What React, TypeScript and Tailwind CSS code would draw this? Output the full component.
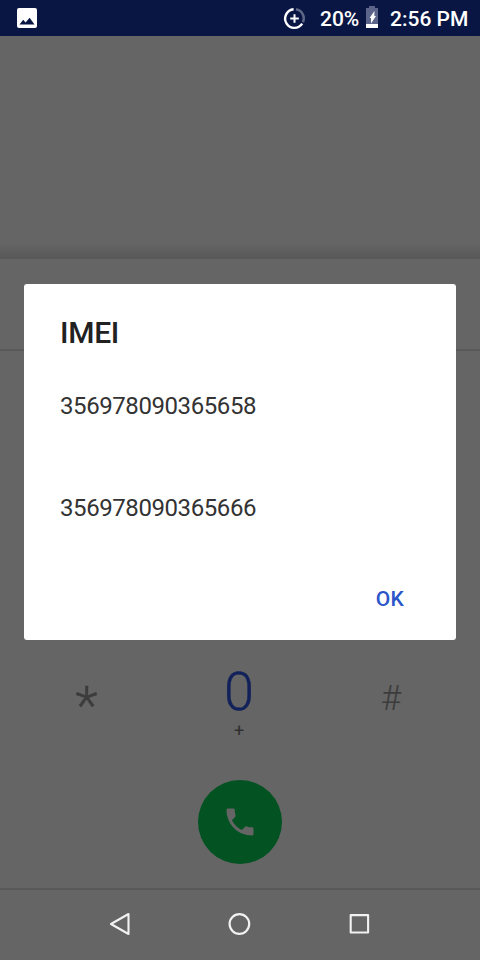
import React from "react";

function StatusBar() {
  return (
    <header className="flex h-9 shrink-0 items-center bg-[#091644] pr-3 pl-[17px] text-white">
      <svg className="size-5" viewBox="0 0 20 20">
        <rect width="20" height="20" rx="2" fill="#fff" />
        <path fill="#091644" d="M2.5 16.5 6.2 11.7 8.6 14.4 12.6 9.8 17.5 16.5z" />
      </svg>
      <svg className="mt-px ml-auto size-[25px]" viewBox="0 0 25 25" fill="none" stroke="#fff" strokeWidth="2.4">
        <path opacity=".35" d="M14 3.3a9.3 9.3 0 0 1 7 13" />
        <path d="M11.6 3.3a9.3 9.3 0 1 0 8.6 14.4" />
        <path strokeWidth="2" d="M12.5 8.2v8.6M8.2 12.5h8.6" />
      </svg>
      <span className="mt-0.5 ml-[13px] w-[46px] text-[21px] leading-none font-medium whitespace-nowrap">20%</span>
      <svg className="-mt-0.5 h-[22px] w-3" viewBox="0 0 12 22">
        <path fill="#5c648a" d="M3 0h6v2h3v20H0V2h3z" />
        <path fill="#fff" d="M0 18h12v4H0zM8.4 5v5H10l-5 7.5V12H3.6z" />
      </svg>
      <span className="mt-0.5 ml-3 w-[78px] text-[21px] leading-none font-medium whitespace-nowrap">2:56 PM</span>
    </header>
  );
}

function Dialer() {
  return (
    <main className="flex flex-1 flex-col">
      <section className="flex h-[223px] flex-col justify-end">
        <div className="h-4 bg-linear-to-b from-[#656565] to-[#585858]" />
      </section>
      <section className="h-[92px] border-b-2 border-[#595959]" />
      <section className="mt-[309px] grid h-[90px] grid-cols-3 text-center font-light text-[#3c3c3c]">
        <div className="pt-5 pl-[13px] text-[52px] leading-[52px] [-webkit-text-stroke:0.5px]">*</div>
        <div className="pr-0.5">
          <div className="pt-[3px] text-[54px] leading-[57px] text-[#12215a] [-webkit-text-stroke:0.4px]">0</div>
          <div className="mt-px text-[18px] leading-5 font-normal text-[#303030]">+</div>
        </div>
        <div className="pt-[19px] pr-[18px] text-[35px] leading-[40px]">#</div>
      </section>
      <section className="mt-[30px] flex justify-center">
        <button className="flex size-[84px] items-center justify-center rounded-full bg-[#025222]">
          <svg className="size-9" viewBox="0 0 24 24" fill="#656565">
            <path d="M6.62 10.79c1.44 2.83 3.76 5.14 6.59 6.59l2.2-2.2c.27-.27.67-.36 1.02-.24 1.12.37 2.33.57 3.57.57.55 0 1 .45 1 1V20c0 .55-.45 1-1 1-9.39 0-17-7.61-17-17 0-.55.45-1 1-1h3.5c.55 0 1 .45 1 1 0 1.25.2 2.45.57 3.57.11.35.03.74-.25 1.02l-2.2 2.2z" />
          </svg>
        </button>
      </section>
    </main>
  );
}

function NavigationBar() {
  return (
    <nav className="flex h-[72px] shrink-0 items-center justify-center gap-24 border-t-2 border-[#595959] pb-0.5">
      <svg className="size-6" viewBox="0 0 24 24" fill="none" stroke="#f1f1f1" strokeWidth="2.1" strokeLinejoin="round">
        <path d="M3 12 20.5 2v20z" />
      </svg>
      <svg className="size-6" viewBox="0 0 24 24" fill="none" stroke="#f1f1f1" strokeWidth="2.2">
        <circle cx="11.4" cy="12" r="9.8" />
      </svg>
      <svg className="size-6" viewBox="0 0 24 24" fill="none" stroke="#f1f1f1" strokeWidth="2.1" strokeLinejoin="round">
        <path d="M2.7 3.1h17.4v17.4H2.7z" />
      </svg>
    </nav>
  );
}

function ImeiDialog() {
  return (
    <div role="dialog" className="absolute inset-x-6 top-[284px] flex h-[356px] flex-col rounded-[3px] bg-white px-9">
      <h1 className="mt-[31px] text-[30px] leading-9 font-medium tracking-[-0.3px] text-[#212121]">IMEI</h1>
      <p className="mt-10 text-[24px] leading-[30px] tracking-[-0.42px] text-[#333333]">356978090365658</p>
      <p className="mt-[72px] text-[24px] leading-[30px] tracking-[-0.42px] text-[#333333]">356978090365666</p>
      <button className="mt-[61px] mr-4 self-end text-[21px] leading-[30px] font-medium tracking-[0.2px] text-[#2b55c9]">
        OK
      </button>
    </div>
  );
}

export default function App() {
  return (
    <div className="relative flex h-[960px] w-[480px] flex-col overflow-hidden bg-[#656565] font-[Roboto,sans-serif]">
      <StatusBar />
      <Dialer />
      <NavigationBar />
      <ImeiDialog />
    </div>
  );
}
